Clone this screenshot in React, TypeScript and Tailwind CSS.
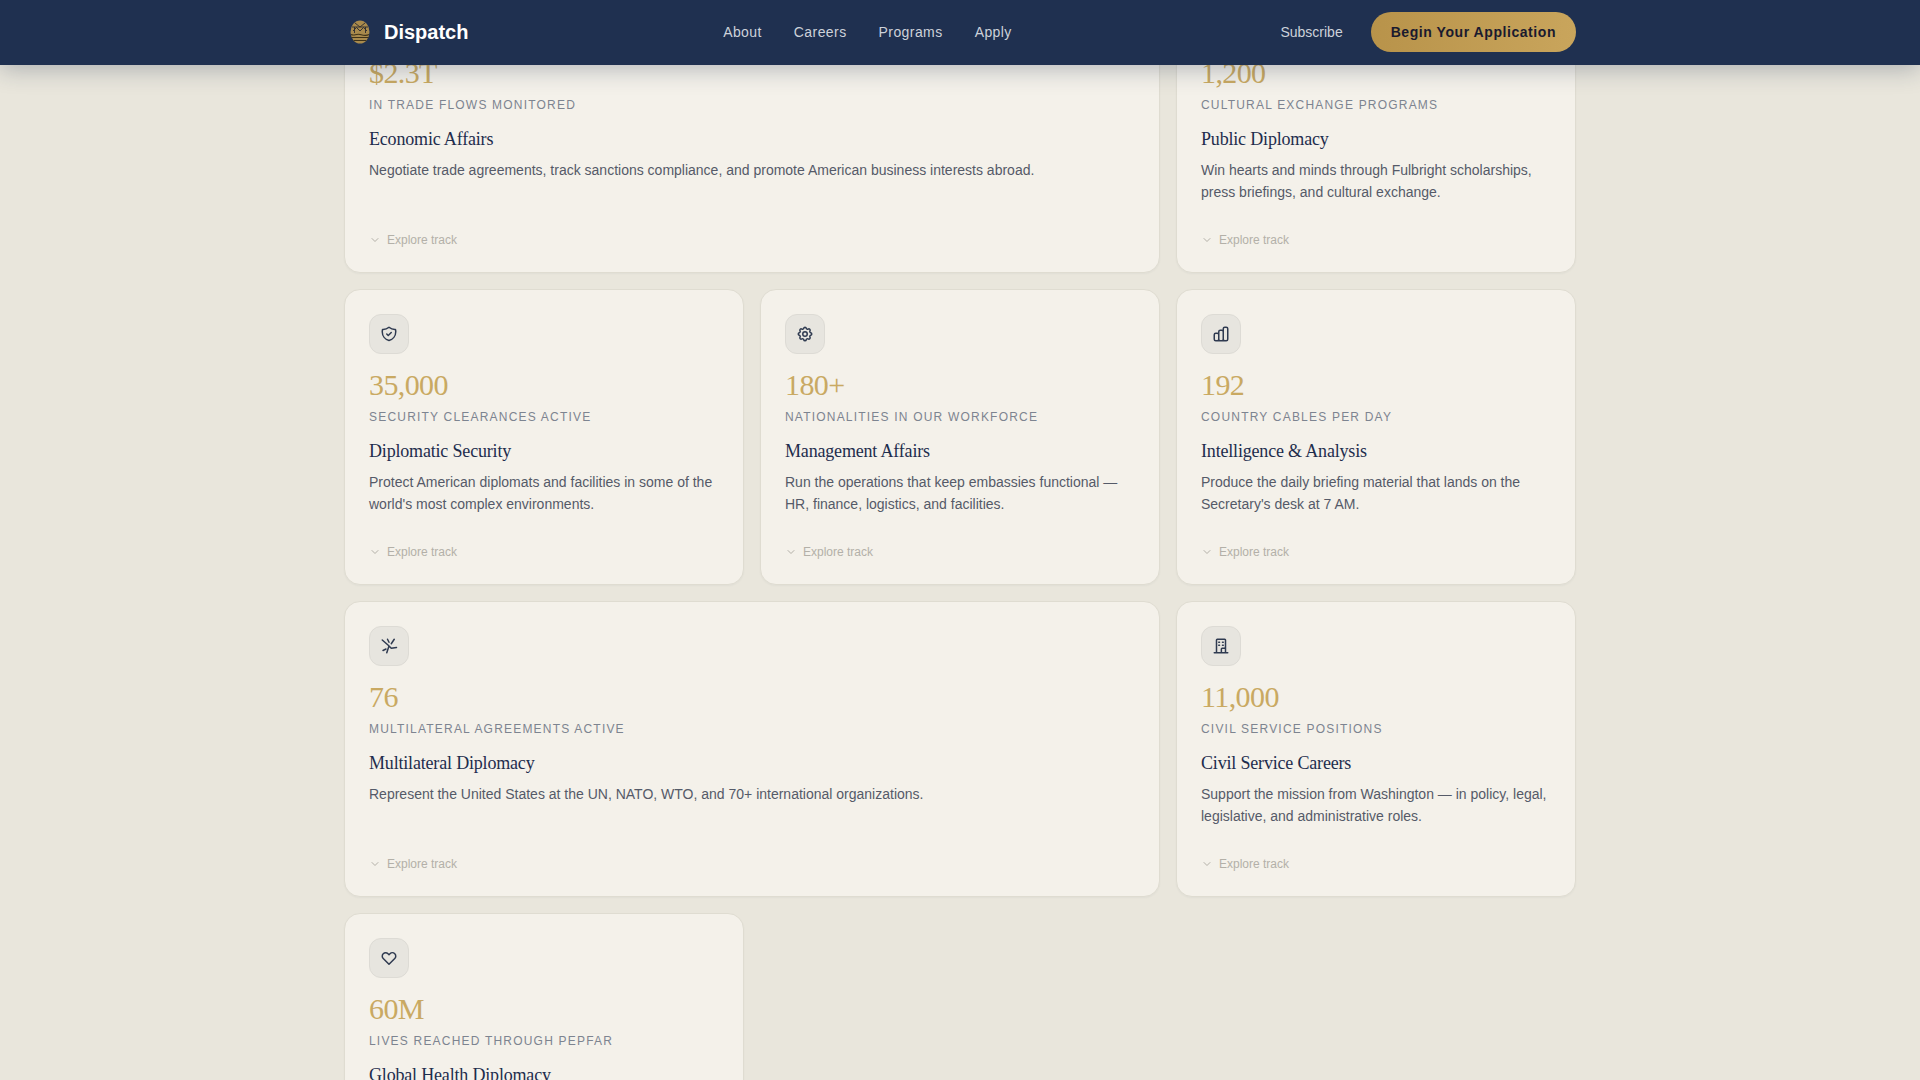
import { ChevronDown } from 'lucide-react';
import {
  HiOutlineShieldCheck,
  HiOutlineCog,
  HiOutlineChartBar,
  HiOutlineHeart,
  HiOutlineCurrencyDollar,
  HiOutlineChatAlt2,
} from 'react-icons/hi';
import type { ReactNode } from 'react';

interface Track {
  icon: ReactNode;
  stat: string;
  label: string;
  title: string;
  desc: string;
  wide?: boolean;
}

const iconClass = 'h-[18px] w-[18px] text-[#2f3a50]';

// no package has these two quite right, so they are drawn by hand
function BranchIcon() {
  return (
    <svg viewBox="0 0 24 24" fill="none" stroke="currentColor" strokeWidth="2" strokeLinecap="round" className={iconClass}>
      <path d="M3 4l8 7M19 3l-4 6M10 3l2 4M12 12l-3 9M15 15l7-1M12 12l3 3M4 18l4-2" />
    </svg>
  );
}

function OfficeIcon() {
  return (
    <svg viewBox="0 0 24 24" fill="none" stroke="currentColor" strokeWidth="2" strokeLinecap="round" strokeLinejoin="round" className={iconClass}>
      <path d="M6 21V4a1 1 0 011-1h10a1 1 0 011 1v17M3 21h18M12.5 21v-5a1 1 0 011-1h3.5M9 7h1M14 7h1M9 11h1M14 11h1" />
    </svg>
  );
}

const TRACKS: Track[] = [
  {
    icon: <HiOutlineCurrencyDollar className={iconClass} />,
    stat: '$2.3T',
    label: 'In trade flows monitored',
    title: 'Economic Affairs',
    desc: 'Negotiate trade agreements, track sanctions compliance, and promote American business interests abroad.',
    wide: true,
  },
  {
    icon: <HiOutlineChatAlt2 className={iconClass} />,
    stat: '1,200',
    label: 'Cultural exchange programs',
    title: 'Public Diplomacy',
    desc: 'Win hearts and minds through Fulbright scholarships, press briefings, and cultural exchange.',
  },
  {
    icon: <HiOutlineShieldCheck className={iconClass} />,
    stat: '35,000',
    label: 'Security clearances active',
    title: 'Diplomatic Security',
    desc: "Protect American diplomats and facilities in some of the world's most complex environments.",
  },
  {
    icon: <HiOutlineCog className={iconClass} />,
    stat: '180+',
    label: 'Nationalities in our workforce',
    title: 'Management Affairs',
    desc: 'Run the operations that keep embassies functional — HR, finance, logistics, and facilities.',
  },
  {
    icon: <HiOutlineChartBar className={iconClass} />,
    stat: '192',
    label: 'Country cables per day',
    title: 'Intelligence & Analysis',
    desc: "Produce the daily briefing material that lands on the Secretary's desk at 7 AM.",
  },
  {
    icon: <BranchIcon />,
    stat: '76',
    label: 'Multilateral agreements active',
    title: 'Multilateral Diplomacy',
    desc: 'Represent the United States at the UN, NATO, WTO, and 70+ international organizations.',
    wide: true,
  },
  {
    icon: <OfficeIcon />,
    stat: '11,000',
    label: 'Civil service positions',
    title: 'Civil Service Careers',
    desc: 'Support the mission from Washington — in policy, legal, legislative, and administrative roles.',
  },
  {
    icon: <HiOutlineHeart className={iconClass} />,
    stat: '60M',
    label: 'Lives reached through PEPFAR',
    title: 'Global Health Diplomacy',
    desc: 'Lead the fight against HIV and global disease through the largest health initiative in history.',
  },
];

function Logo() {
  return (
    <svg width="20" height="24" viewBox="0 0 20 24" fill="none">
      <ellipse cx="10" cy="12" rx="9.5" ry="11.5" fill="#a98a4c" />
      <path d="M2 7h16M5 3l5 4 5-4M3 11l3.5-3.5L10 11l3.5-3.5L17 11M4.5 7v6M15.5 7v6" stroke="#2a2a30" strokeWidth="0.9" />
      <path d="M1 14.5c3 1.8 5-1 9 0s6 1.8 9 0M1.5 17.5h17M3.5 20.5h13" stroke="#3f3218" strokeWidth="1.1" />
    </svg>
  );
}

function TrackCard({ track }: { track: Track }) {
  return (
    <div className={`flex h-[296px] flex-col rounded-2xl border border-[#dfdcd1] bg-[#f4f1ea] p-6 shadow-[0_1px_2px_rgba(30,45,77,0.04)] ${track.wide ? 'col-span-2' : ''}`}>
      <div className="flex h-10 w-10 items-center justify-center rounded-xl border border-[#dddbd5] bg-[#e7e5df]">{track.icon}</div>
      <div className="mt-4 font-['Liberation_Serif',serif] text-3xl leading-[30px] tracking-[-0.02em] text-[#c9a962]">{track.stat}</div>
      <div className="mt-[9px] text-xs uppercase tracking-[0.1em] text-[#7d8490]">{track.label}</div>
      <h3 className="mt-3 font-['Liberation_Serif',serif] text-lg tracking-[-0.01em] text-[#1e2d4d]">{track.title}</h3>
      <p className="mt-1.5 text-sm leading-[22px] text-[#555a68]">{track.desc}</p>
      <div className="mt-auto flex items-center gap-1.5 text-xs text-[#b3b0a8]">
        <ChevronDown className="h-3 w-3" />
        Explore track
      </div>
    </div>
  );
}

export default function App() {
  return (
    <div className="relative h-screen overflow-hidden bg-[#e9e6dc] font-['Liberation_Sans',sans-serif]">
      <nav className="absolute inset-x-0 top-0 z-10 border-b border-[#1f3050] bg-[#1f3050] shadow-[0_4px_24px_rgba(30,45,77,0.3)]">
        <div className="mx-auto flex h-16 max-w-[1232px] items-center justify-between">
          <div className="flex items-center gap-3.5 pl-1.5">
            <Logo />
            <span className="text-xl font-semibold text-white">Dispatch</span>
          </div>
          <div className="mr-[14px] flex items-center gap-8 text-sm tracking-[0.03em] text-[#cdd2da]">
            <span>About</span>
            <span>Careers</span>
            <span>Programs</span>
            <span>Apply</span>
          </div>
          <div className="flex items-center gap-7">
            <span className="text-sm text-[#cdd2da]">Subscribe</span>
            <button className="h-10 rounded-full bg-gradient-to-r from-[#b8934a] to-[#c9a55c] px-5 text-sm font-bold tracking-[0.04em] text-[#1a1a2e]">
              Begin Your Application
            </button>
          </div>
        </div>
      </nav>
      <main className="mx-auto -mt-[23px] grid max-w-[1232px] grid-cols-3 gap-4">
        {TRACKS.map((track) => (
          <TrackCard key={track.title} track={track} />
        ))}
      </main>
    </div>
  );
}
